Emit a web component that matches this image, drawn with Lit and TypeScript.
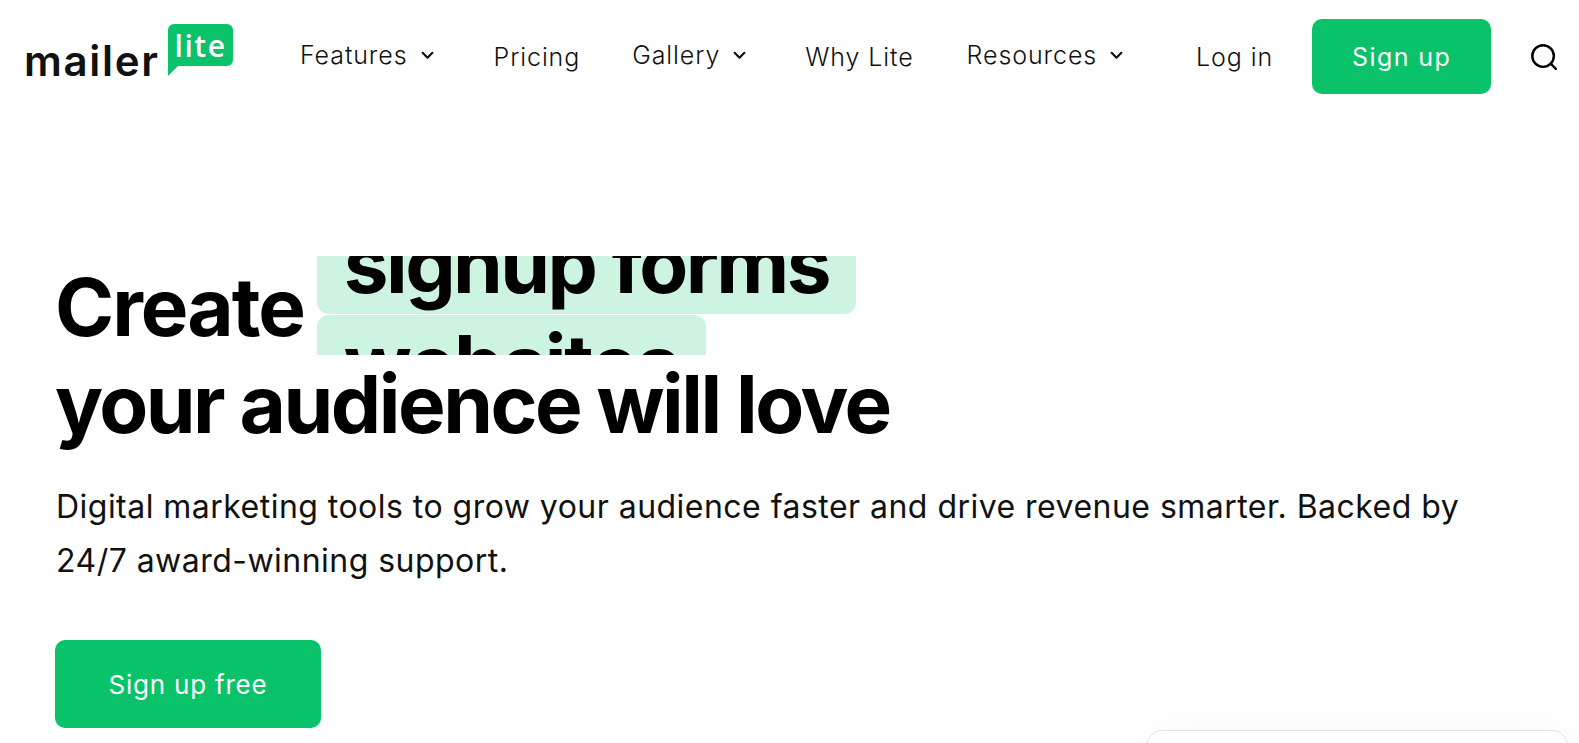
import { LitElement, html, css } from 'lit';
import { customElement } from 'lit/decorators.js';

const chevron = html`<svg class="chev" viewBox="0 0 12 8" width="13" height="9"><path d="M1.5 1.5 6 6l4.5-4.5" fill="none" stroke="#111" stroke-width="2" stroke-linecap="round" stroke-linejoin="round"/></svg>`;

@customElement('app-root')
export class AppRoot extends LitElement {
  static styles = css`
    :host {
      display: block;
      height: 743px;
      overflow: hidden;
      background: #fff;
      color: #000;
      font-family: Inter, "Liberation Sans", sans-serif;
    }
    .header {
      display: flex;
      align-items: center;
      height: 75px;
      padding: 19px 0 0 25px;
    }
    .logo {
      display: flex;
      align-items: flex-start;
      align-self: flex-start;
      flex: none;
      width: 208px;
      margin-top: 5px;
    }
    .logo-word {
      width: 144px;
      margin: 18px 0 0 -1px;
      font-size: 42px;
      font-weight: 600;
      line-height: 37px;
      letter-spacing: 1.7px;
      color: #111;
    }
    .bubble {
      position: relative;
      width: 65px;
      height: 42px;
      border-radius: 6px 6px 6px 0;
      background: #09c269;
      color: #fff;
      font-family: "Open Sans", sans-serif;
      font-size: 30px;
      font-weight: 600;
      line-height: 44px;
      letter-spacing: 1.5px;
      text-align: center;
    }
    .bubble::after {
      content: '';
      position: absolute;
      left: 0;
      top: 100%;
      border-top: 10px solid #09c269;
      border-right: 10px solid transparent;
    }
    .nav {
      display: flex;
      align-items: center;
      flex: none;
      font-size: 25px;
      font-weight: 300;
      letter-spacing: 0.9px;
      color: #111;
    }
    .nav a {
      display: flex;
      align-items: center;
      flex: none;
    }
    .nav .drop { margin-top: -3px; }
    .nav a:nth-child(1) { margin-left: 67px; }
    .nav a:nth-child(2) { margin-left: 60px; }
    .nav a:nth-child(3) { margin-left: 52px; }
    .nav a:nth-child(4) { margin-left: 59px; }
    .nav a:nth-child(5) { margin-left: 53px; }
    .nav a:nth-child(6) { margin-left: 73px; }
    .chev { margin-left: 13px; }
    .signup {
      display: flex;
      align-items: center;
      justify-content: center;
      flex: none;
      width: 179px;
      height: 75px;
      margin-left: 39px;
      border-radius: 10px;
      background: #09c269;
      color: #fff;
      font-size: 25px;
      letter-spacing: 1.4px;
    }
    .search {
      flex: none;
      margin-left: 40px;
    }
    .hero {
      padding: 162px 0 0 55px;
    }
    h1 {
      margin: 0;
      font-size: 80px;
      font-weight: 700;
      line-height: 96px;
      letter-spacing: -2.5px;
    }
    .line-one {
      display: flex;
      align-items: flex-start;
      height: 99px;
    }
    .create {
      margin-top: 3px;
      letter-spacing: -2px;
    }
    .words {
      height: 99px;
      margin-left: 13px;
      overflow: hidden;
    }
    .word-list {
      display: flex;
      flex-direction: column;
      align-items: flex-start;
      gap: 1px;
      margin-top: -41px;
    }
    .word {
      height: 98px;
      padding: 1px 27px 0;
      border-radius: 12px;
      background: #cdf3e1;
      letter-spacing: -2.6px;
    }
    .word + .word { letter-spacing: -2.2px; }
    .line-two { margin-top: 1px; }
    .lead {
      width: 1450px;
      margin: 28px 0 0 1px;
      font-size: 32px;
      line-height: 54px;
      letter-spacing: 0.47px;
      color: #111;
    }
    .cta {
      display: flex;
      align-items: center;
      justify-content: center;
      width: 266px;
      height: 88px;
      margin-top: 52px;
      border-radius: 10px;
      background: #09c269;
      color: #fff;
      font-size: 26px;
      letter-spacing: 0.8px;
    }
    .card {
      width: 420px;
      height: 200px;
      margin: 2px 0 0 1091px;
      border: 1px solid #e4e4e4;
      border-radius: 16px;
      background: #fff;
      box-shadow: 0 0 60px rgba(0, 0, 0, 0.03);
    }
  `;

  render() {
    return html`
      <header class="header">
        <div class="logo">
          <span class="logo-word">mailer</span>
          <span class="bubble">lite</span>
        </div>
        <nav class="nav">
          <a class="drop">Features${chevron}</a>
          <a>Pricing</a>
          <a class="drop">Gallery${chevron}</a>
          <a>Why Lite</a>
          <a class="drop">Resources${chevron}</a>
          <a>Log in</a>
        </nav>
        <div class="signup">Sign up</div>
        <svg class="search" width="26" height="26" viewBox="0 0 28 28"><circle cx="13" cy="13" r="11.6" fill="none" stroke="#000" stroke-width="2.6"/><path d="M21.5 21.5l5.2 5.2" stroke="#000" stroke-width="2.6" stroke-linecap="round"/></svg>
      </header>
      <section class="hero">
        <h1>
          <div class="line-one">
            <span class="create">Create</span>
            <div class="words">
              <div class="word-list">
                <span class="word">signup forms</span>
                <span class="word">websites</span>
              </div>
            </div>
          </div>
          <div class="line-two">your audience will love</div>
        </h1>
        <p class="lead">Digital marketing tools to grow your audience faster and drive revenue smarter. Backed by 24/7 award-winning support.</p>
        <div class="cta">Sign up free</div>
        <div class="card"></div>
      </section>
    `;
  }
}
